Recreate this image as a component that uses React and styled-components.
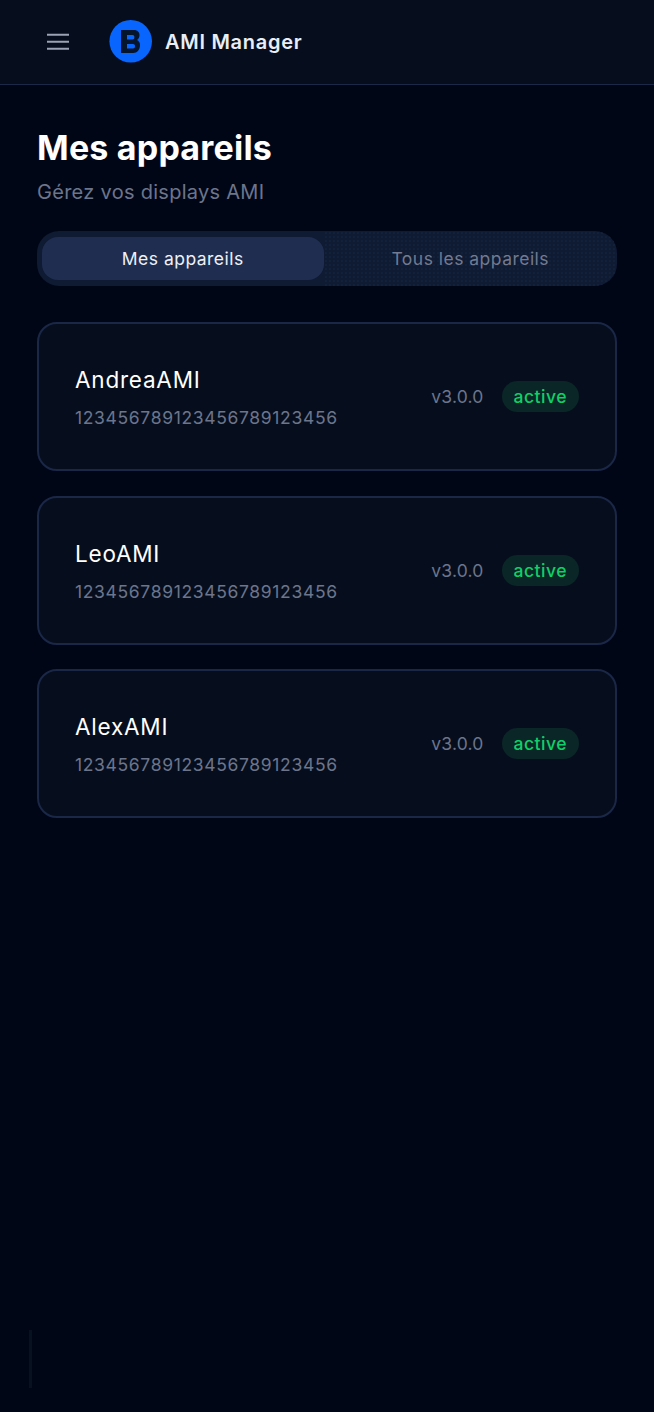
import React from "react";
import styled, { createGlobalStyle } from "styled-components";

const Global = createGlobalStyle`
  html, body { margin: 0; padding: 0; background: #010617; }
  body { font-family: Inter, "Liberation Sans", sans-serif; }
  * { box-sizing: border-box; }
`;

const Page = styled.div`
  position: relative;
  width: 654px;
  height: 1412px;
  background: #010617;
  overflow: hidden;
`;

const Header = styled.header`
  display: flex;
  align-items: center;
  height: 85px;
  padding: 0 0 1px 46px;
  background: #060e1d;
  border-bottom: 1px solid #1b2848;
`;

const MenuButton = styled.button`
  display: flex;
  width: 24px;
  height: 24px;
  padding: 0;
  margin-right: 39px;
  border: 0;
  background: none;
  color: #9aa2b3;
`;

const Brand = styled.div`
  display: flex;
  align-items: center;
  gap: 12px;
`;

const BrandName = styled.span`
  font-size: 20px;
  font-weight: 600;
  line-height: 28px;
  letter-spacing: 0.72px;
  color: #e8edf6;
`;

const Main = styled.main`
  padding: 43px 37px 0;
`;

const Title = styled.h1`
  margin: 0;
  font-size: 34px;
  font-weight: 700;
  line-height: 40px;
  letter-spacing: 0.2px;
  color: #ffffff;
`;

const Subtitle = styled.p`
  margin: 10px 0 0;
  font-size: 20px;
  line-height: 28px;
  letter-spacing: 0.28px;
  color: #6c758c;
`;

const Tabs = styled.div`
  display: grid;
  grid-template-columns: 1fr 1fr;
  gap: 6px;
  height: 55px;
  margin-top: 25px;
  padding: 6px 6px 6px 5px;
  border-radius: 22px;
  background: #0f1a33;
`;

const Tab = styled.button`
  border: 0;
  border-radius: 16px;
  padding: 0;
  font-family: inherit;
  font-size: 17.5px;
  font-weight: 400;
  letter-spacing: 0.48px;
  background: #1f2e50;
  color: #eef1f7;
`;

const InactiveTab = styled(Tab)`
  margin: -6px;
  padding: 0 6px;
  border-radius: 0 22px 22px 0;
  color: #717a90;
  background-color: transparent;
  background-image: radial-gradient(circle, #132039 0.7px, transparent 1px);
  background-size: 4px 4px;
`;

const List = styled.div`
  display: flex;
  flex-direction: column;
  gap: 24.5px;
  margin-top: 36px;
`;

const Card = styled.div`
  display: flex;
  align-items: center;
  justify-content: space-between;
  height: 149px;
  padding: 0 36px;
  border: 2px solid #1a2747;
  border-radius: 20px;
  background: #060e1d;
`;

const Info = styled.div`
  display: flex;
  flex-direction: column;
  gap: 11px;
  padding-top: 2px;
`;

const Name = styled.div`
  font-size: 22.5px;
  line-height: 30px;
  letter-spacing: 0.78px;
  color: #ffffff;
`;

const Serial = styled.div`
  font-size: 17.5px;
  line-height: 24px;
  letter-spacing: 0.66px;
  color: #6c758c;
`;

const Meta = styled.div`
  display: flex;
  align-items: center;
  gap: 18px;
`;

const Version = styled.span`
  font-size: 17.5px;
  letter-spacing: 0.2px;
  color: #6c758c;
`;

const Badge = styled.span`
  display: flex;
  align-items: center;
  height: 31px;
  padding: 0 12px;
  border-radius: 16px;
  background: #0b2627;
  font-size: 17.5px;
  font-weight: 500;
  letter-spacing: 0.5px;
  color: #10cf68;
`;

const Trace = styled.div`
  position: absolute;
  left: 29px;
  top: 1330px;
  width: 3px;
  height: 58px;
  background: #06121f;
`;

const devices = ["AndreaAMI", "LeoAMI", "AlexAMI"];

export default function App() {
  return (
    <Page>
      <Global />
      <Header>
        <MenuButton aria-label="Menu">
          <svg width="24" height="24" viewBox="0 0 24 24" fill="none" stroke="currentColor" strokeWidth="2">
            <path d="M1 4.700h22M1 11.700h22M1 18.700h22" />
          </svg>
        </MenuButton>
        <Brand>
          <svg width="44" height="44" viewBox="0 0 44 44">
            <circle cx="21.700" cy="21.300" r="21.300" fill="#0866ff" />
            <path
              fillRule="evenodd"
              fill="#06152e"
              d="M12 10h13c3.500 0 5.500 2.200 5.500 5.200 0 2.200-1 3.800-2.500 4.800 2 .9 3 2.800 3 5 0 4.600-2.700 8-6.800 8H12zM18 15v4.500h5.500c1.200 0 1.900-1 1.900-2.300S24.700 15 23.500 15zM18 24v4.500h6c1.300 0 2-1 2-2.300S25.300 24 24 24z"
            />
          </svg>
          <BrandName>AMI Manager</BrandName>
        </Brand>
      </Header>
      <Main>
        <Title>Mes appareils</Title>
        <Subtitle>Gérez vos displays AMI</Subtitle>
        <Tabs>
          <Tab>Mes appareils</Tab>
          <InactiveTab>Tous les appareils</InactiveTab>
        </Tabs>
        <List>
          {devices.map((d) => (
            <Card key={d}>
              <Info>
                <Name>{d}</Name>
                <Serial>123456789123456789123456</Serial>
              </Info>
              <Meta>
                <Version>v3.0.0</Version>
                <Badge>active</Badge>
              </Meta>
            </Card>
          ))}
        </List>
      </Main>
      <Trace />
    </Page>
  );
}
